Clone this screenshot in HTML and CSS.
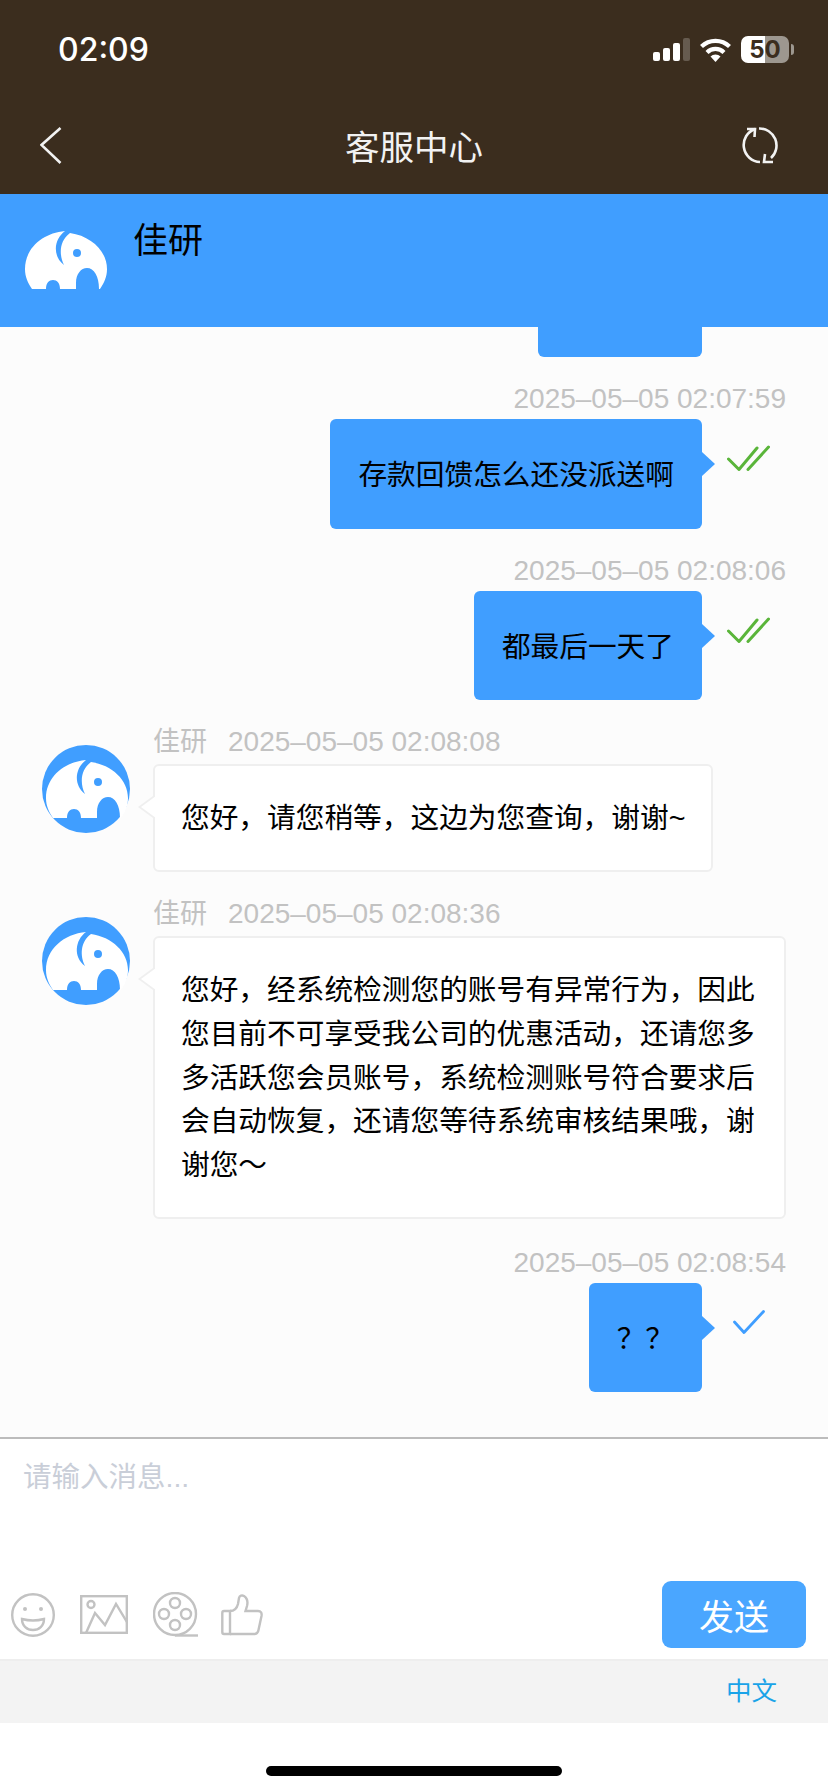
FILE: index.html
```html
<!DOCTYPE html>
<html lang="zh-CN">
<head>
  <meta charset="UTF-8" />
  <meta name="viewport" content="width=device-width, initial-scale=1.0"/>
  <title>客服中心</title>
  <link rel="stylesheet" href="styles.css">
</head>
<body>

  <svg class="defs" width="0" height="0">
    <symbol id="elephant" viewBox="0 0 82 58">
      <path fill-rule="evenodd" d="M7 58C3 52 0 46 0 38C0 17 18 2 40 0C29 8 27 25 39 34C34 24 34 10 45 2C66 5 82 20 82 38C82 46 79 52 75 58L74 58C74 45 69 37 62 37C56 37 51 43 51 52L51 58L35 58C35 52 32 49 28 49C24 49 21 52 21 58ZM52 18A4 4 0 1 0 52 26A4 4 0 1 0 52 18Z"/>
    </symbol>
    <symbol id="ticks" viewBox="0 0 43 26">
      <path d="M1.500 14L12 24.500L30 3M21 24.500L41.500 2" fill="none" stroke="#5ab53a" stroke-width="3" stroke-linecap="round" stroke-linejoin="round"/>
    </symbol>
  </svg>

  <div class="page">
    <div class="top-bar">
      <div class="status">
        <span class="clock">02:09</span>
        <div class="status-icons">
          <svg width="37" height="23" viewBox="0 0 37 23">
            <rect x="0" y="14" width="7" height="9" rx="2" fill="#fff"/>
            <rect x="10" y="10" width="7" height="13" rx="2" fill="#fff"/>
            <rect x="20" y="5" width="7" height="18" rx="2" fill="#fff"/>
            <rect x="30" y="0" width="7" height="23" rx="2" fill="#fff" opacity="0.22"/>
          </svg>
          <svg width="33" height="25" viewBox="0 0 33 25">
            <path d="M2.500 9.500A20 20 0 0 1 30.500 9.500M8 15.500A12 12 0 0 1 25 15.500" fill="none" stroke="#fff" stroke-width="4.200"/>
            <path d="M16.500 25L11.500 19.500A7 7 0 0 1 21.500 19.500Z" fill="#fff"/>
          </svg>
          <div class="battery">50</div>
        </div>
      </div>
      <div class="nav">
        <svg width="22" height="37" viewBox="0 0 22 37">
          <path d="M20.500 1L1.500 18L20.500 36" fill="none" stroke="#f2f2f2" stroke-width="2.600"/>
        </svg>
        <h1>客服中心</h1>
        <svg class="refresh" width="36" height="37" viewBox="0 0 36 37">
          <path d="M13 2A17 17 0 0 0 18 35M17 1.500A17 17 0 0 1 29 31" fill="none" stroke="#f2f2f2" stroke-width="2.600"/>
          <path d="M5 2L13 2L12.500 10M23 27L22 35L31 35" fill="none" stroke="#f2f2f2" stroke-width="2.600"/>
        </svg>
      </div>
    </div>

    <div class="agent-bar">
      <svg class="agent-logo" width="82" height="58"><use href="#elephant"/></svg>
      <span class="agent-name">佳研</span>
    </div>

    <div class="chat">
      <div class="stub"></div>

      <div class="msg-out">
        <div class="time">2025–05–05 02:07:59</div>
        <div class="out-row">
          <div class="bubble blue">存款回馈怎么还没派送啊</div>
          <div class="tick"><svg width="43" height="26"><use href="#ticks"/></svg></div>
        </div>
      </div>

      <div class="msg-out">
        <div class="time">2025–05–05 02:08:06</div>
        <div class="out-row">
          <div class="bubble blue">都最后一天了</div>
          <div class="tick"><svg width="43" height="26"><use href="#ticks"/></svg></div>
        </div>
      </div>

      <div class="msg-in">
        <svg class="avatar" width="88" height="88" viewBox="0 0 88 88">
          <circle cx="44" cy="44" r="44" fill="#409eff"/>
          <svg x="4" y="15" width="82" height="58" class="avatar-mark"><use href="#elephant"/></svg>
        </svg>
        <div class="in-body">
          <div class="time"><span class="who">佳研</span>2025–05–05 02:08:08</div>
          <div class="bubble white">您好，请您稍等，这边为您查询，谢谢~</div>
        </div>
      </div>

      <div class="msg-in">
        <svg class="avatar" width="88" height="88" viewBox="0 0 88 88">
          <circle cx="44" cy="44" r="44" fill="#409eff"/>
          <svg x="4" y="15" width="82" height="58" class="avatar-mark"><use href="#elephant"/></svg>
        </svg>
        <div class="in-body">
          <div class="time"><span class="who">佳研</span>2025–05–05 02:08:36</div>
          <div class="bubble white">您好，经系统检测您的账号有异常行为，因此您目前不可享受我公司的优惠活动，还请您多多活跃您会员账号，系统检测账号符合要求后会自动恢复，还请您等待系统审核结果哦，谢谢您～</div>
        </div>
      </div>

      <div class="msg-out">
        <div class="time">2025–05–05 02:08:54</div>
        <div class="out-row">
          <div class="bubble blue">？？</div>
          <div class="tick single">
            <svg width="32" height="24" viewBox="0 0 32 24">
              <path d="M1.500 12L11 22.500L30.500 1.500" fill="none" stroke="#409eff" stroke-width="2.800" stroke-linecap="round" stroke-linejoin="round"/>
            </svg>
          </div>
        </div>
      </div>
    </div>

    <div class="composer">
      <div class="input-box">请输入消息...</div>
      <div class="toolbar">
        <!-- emoji -->
        <svg width="44" height="44" viewBox="0 0 44 44" class="tool">
          <circle cx="22" cy="22" r="20.800"/>
          <circle cx="14" cy="16" r="2" class="dot"/>
          <circle cx="30" cy="16" r="2" class="dot"/>
          <path d="M11 26Q22 29 33 26C33 33 28 37 22 37C16 37 11 33 11 26Z"/>
        </svg>
        <!-- picture -->
        <svg width="48" height="39" viewBox="0 0 48 39" class="tool">
          <rect x="1.200" y="1.200" width="45.600" height="36.600"/>
          <circle cx="11" cy="9.500" r="3.500"/>
          <path d="M6 38L15 18L25 30L36 9L47.500 28"/>
        </svg>
        <!-- video -->
        <svg width="46" height="45" viewBox="0 0 46 45" class="tool">
          <circle cx="22" cy="22" r="21"/>
          <circle cx="22" cy="11" r="5"/>
          <circle cx="22" cy="33" r="5"/>
          <circle cx="11" cy="22" r="5"/>
          <circle cx="33" cy="22" r="5"/>
          <path d="M22 43.500L45 43.500"/>
        </svg>
        <!-- like -->
        <svg width="42" height="42" viewBox="0 0 42 42" class="tool like">
          <path d="M9 17L3 17C2 17 1.300 18 1.300 19L1.300 38C1.300 39.500 2 40 3 40L9 40Z"/>
          <path d="M9 17C13 17 16 14 17 10L18 4C18.500 1.500 21 1 23 2C26 4 27 8 26 12L24.500 17L37 17C40 17 41 19 40.500 22L37.500 36C37 39 35 40 33 40L9 40"/>
        </svg>
        <button class="send">发送</button>
      </div>
    </div>

    <div class="lang-bar"><span>中文</span></div>
    <div class="home-area"><div class="home-bar"></div></div>
  </div>

</body>
</html>
```

FILE: styles.css
```css
* {
  box-sizing: border-box;
  margin: 0;
  padding: 0;
}

body {
  font-family: "Liberation Sans", "Noto Sans CJK SC", sans-serif;
  background: #fff;
  color: #000;
}

.defs {
  position: absolute;
}

.page {
  display: flex;
  flex-direction: column;
  height: 1792px;
  overflow: hidden;
}

/* status bar and title */
.top-bar {
  height: 194px;
  background: #3b2d1e;
  color: #fff;
}

.status {
  display: flex;
  justify-content: space-between;
  align-items: center;
  height: 98px;
  padding: 0 39px 0 58px;
}

.clock {
  font-family: Inter, sans-serif;
  font-size: 32px;
  font-weight: 500;
}

.status-icons {
  display: flex;
  align-items: center;
  gap: 9px;
}

.battery {
  position: relative;
  width: 48px;
  height: 27px;
  border-radius: 7px;
  background: linear-gradient(90deg, #fff 50%, #9d978f 50%);
  color: #3b2d1e;
  font-family: Inter, sans-serif;
  font-size: 24px;
  font-weight: 700;
  line-height: 27px;
  text-align: center;
}

.battery::after {
  content: "";
  position: absolute;
  top: 8px;
  right: -5px;
  width: 3px;
  height: 11px;
  border-radius: 0 3px 3px 0;
  background: #9d978f;
}

.nav {
  display: grid;
  grid-template-columns: 1fr auto 1fr;
  align-items: center;
  height: 94px;
  padding: 0 40px;
}

.nav h1 {
  font-size: 34.500px;
  font-weight: 400;
  color: #f2f2f2;
}

.refresh {
  justify-self: end;
  margin-right: 10px;
}

/* agent strip */
.agent-bar {
  display: flex;
  height: 133px;
  background: #409eff;
}

.agent-logo {
  margin: 37px 0 0 25px;
  fill: #fff;
}

.agent-name {
  margin: 23px 0 0 26px;
  font-size: 35px;
  line-height: 48px;
}

/* messages */
.chat {
  flex: 1;
  min-height: 0;
  background: #fcfcfc;
  overflow: hidden;
}

.stub {
  width: 164px;
  height: 30px;
  margin-left: 538px;
  background: #409eff;
  border-radius: 0 0 6px 6px;
}

.time {
  color: #c2c2c2;
  font-size: 28px;
  line-height: 34px;
}

.msg-out {
  display: flex;
  flex-direction: column;
  align-items: flex-end;
  margin-top: 25px;
  padding-right: 42px;
}

.msg-in + .msg-out {
  margin-top: 27px;
}

.msg-out .time {
  margin-bottom: 3px;
}

.out-row {
  display: flex;
  margin-right: -42px;
}

.bubble {
  position: relative;
  font-size: 28.7px;
  line-height: 43.7px;
  border-radius: 6px;
}

.bubble.blue {
  padding: 35px 28px 31px;
  background: #409eff;
}

.bubble.blue::after {
  content: "";
  position: absolute;
  top: 33px;
  right: -13px;
  border-style: solid;
  border-width: 12px 0 12px 13px;
  border-color: transparent transparent transparent #409eff;
}

.tick {
  width: 126px;
  padding: 26px 0 0 25px;
}

.tick.single {
  padding: 27px 0 0 31px;
}

.msg-in {
  display: flex;
  margin-top: 25px;
  padding-left: 42px;
}

.avatar {
  flex-shrink: 0;
  margin: 20px 23px 0 0;
}

.avatar-mark {
  fill: #fff;
}

.in-body {
  display: flex;
  flex-direction: column;
  align-items: flex-start;
}

.in-body .time {
  margin-bottom: 5px;
}

.who {
  margin-right: 21px;
  font-size: 27px;
}

.bubble.white {
  max-width: 633px;
  padding: 31px 26px 29px;
  background: #fff;
  border: 2px solid #efefef;
}

/* left tail: grey triangle with a white one laid over it */
.bubble.white::before,
.bubble.white::after {
  content: "";
  position: absolute;
  top: 30px;
  border-style: solid;
  border-width: 11px 15px 11px 0;
  border-color: transparent #efefef transparent transparent;
}

.bubble.white::before {
  left: -17px;
}

.bubble.white::after {
  left: -14px;
  border-right-color: #fff;
}

/* input area */
.composer {
  height: 222px;
  border-top: 2px solid #bcbcbc;
}

.input-box {
  height: 142px;
  padding: 19px 23px;
  color: #c9ced8;
  font-size: 28.500px;
  line-height: 38px;
}

.toolbar {
  display: flex;
  align-items: center;
  gap: 25px;
  padding: 0 22px 0 11px;
}

.tool {
  flex-shrink: 0;
  fill: none;
  stroke: #c2c2c2;
  stroke-width: 2.400;
}

.tool .dot {
  fill: #c2c2c2;
  stroke: none;
}

.tool.like {
  margin-left: -3px;
}

.send {
  width: 144px;
  height: 67px;
  margin-left: auto;
  background: #4aa6ff;
  border: none;
  border-radius: 9px;
  color: #fff;
  font-family: inherit;
  font-size: 35px;
}

.lang-bar {
  height: 64px;
  padding-right: 51px;
  background: #f3f3f3;
  border-top: 2px solid #eee;
  color: #19a3e8;
  font-size: 25.500px;
  line-height: 60px;
  text-align: right;
}

.home-area {
  height: 69px;
  padding-top: 43px;
}

.home-bar {
  width: 296px;
  height: 10px;
  margin: 0 auto;
  border-radius: 5px;
  background: #000;
}
```
